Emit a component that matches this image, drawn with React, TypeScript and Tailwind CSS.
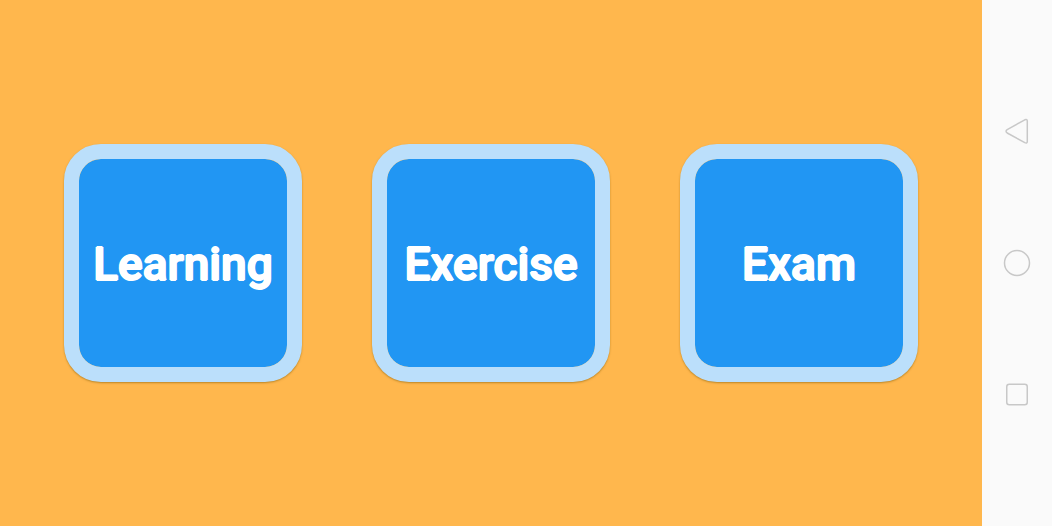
import type { ReactNode } from "react";

const MODES = ["Learning", "Exercise", "Exam"];

const ModeCard = ({ label }: { label: string }) => (
  <button
    type="button"
    className="flex aspect-square max-w-60 flex-1 items-center justify-center rounded-[37px] border-[15px] border-[#bbdffb] bg-[#2196f3] bg-clip-padding pt-0.5 shadow-[0_1px_2px_rgba(120,85,0,0.5)]"
  >
    {/* Shadows on all sides thicken the letters and soften their corners */}
    <span className="font-['Roboto',sans-serif] text-[46px] leading-none font-medium text-white [text-shadow:1px_0_white,-1px_0_white,0_1px_white,0_-1px_white]">
      {label}
    </span>
  </button>
);

const NavButton = ({ label, children }: { label: string; children: ReactNode }) => (
  <button type="button" aria-label={label} className="flex flex-1 items-center justify-center">
    <svg
      viewBox="0 0 28 28"
      className="size-7 fill-none stroke-[#c8c8c8] [stroke-width:1.5]"
      strokeLinejoin="round"
    >
      {children}
    </svg>
  </button>
);

const App = () => {
  return (
    <div className="flex min-h-screen bg-[#ffb74d]">
      <main className="flex flex-1 items-center justify-center gap-[70px] px-16">
        {MODES.map((mode) => (
          <ModeCard key={mode} label={mode} />
        ))}
      </main>

      {/* System navigation bar */}
      <nav className="flex w-[70px] flex-col bg-[#fafafa] py-[12.5vh]">
        <NavButton label="Back">
          <path d="M4.2 11.6 L21.8 1.8 Q24.3 0.8 24.3 3.2 V23.2 Q24.3 26 21.8 24.7 L4.2 15 Q1.9 13.3 4.2 11.6 Z" />
        </NavButton>
        <NavButton label="Home">
          <circle cx="14" cy="14" r="12.5" />
        </NavButton>
        <NavButton label="Recent apps">
          <rect x="3.75" y="3.25" width="20.5" height="20.5" rx="2.5" />
        </NavButton>
      </nav>
    </div>
  );
};

export default App;
